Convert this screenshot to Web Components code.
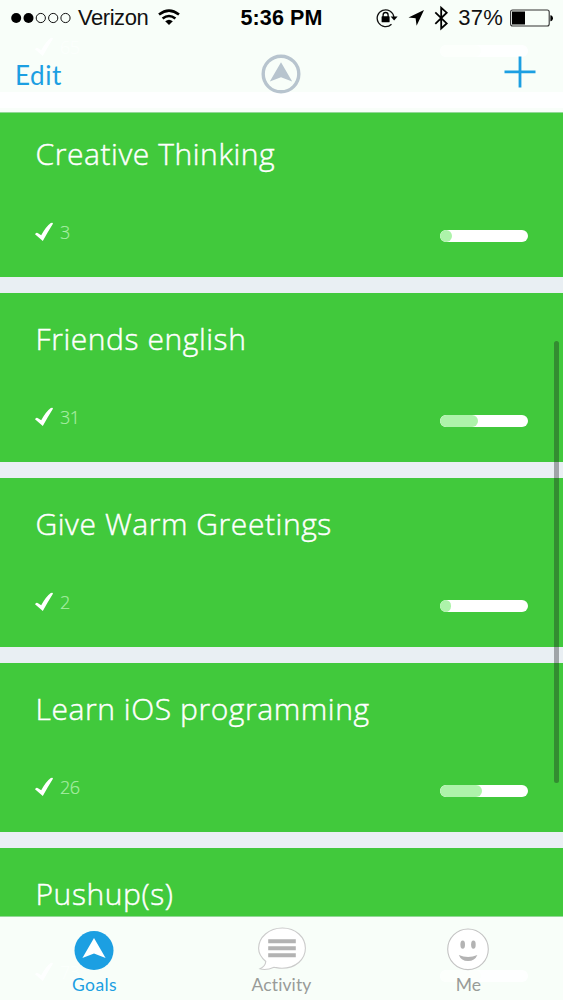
<!DOCTYPE html>
<html lang="en">
<head>
<meta charset="utf-8">
<title>Goals</title>
<style>
    html, body {margin: 0; height: 100%; overflow: hidden; background: #e9eff3}
</style>
</head>
<body>
<goals-app></goals-app>

<script>
// StatusBar
class StatusBar extends HTMLElement {
    constructor() {
        super();
        this.attachShadow({mode: 'open'}).innerHTML = `
            <style>
                :host{display:grid;grid-template-columns:1fr auto 1fr;align-items:center;height:36px;
                    color:#111;font:22px/36px "Liberation Sans",sans-serif;white-space:nowrap}
                div{display:flex;align-items:center}
                svg{display:block;flex:none}
                .left{padding-left:11px}
                .carrier{margin-left:6px;width:71px;letter-spacing:-.45px}
                .wifi{margin-left:9px}
                .time{color:#000;font-weight:bold;font-size:21.5px;letter-spacing:.1px}
                .right{justify-content:flex-end;padding-right:10px}
                .battery{margin-left:7px}
                .charge{margin-left:7px;letter-spacing:.2px}
            </style>
            <div class=left>
                <svg width="61" height="36" viewBox="0 0 61 36">
                    <g fill="#000"><circle cx="5.2" cy="18" r="5"/><circle cx="17.5" cy="18" r="5"/></g>
                    <g fill="none" stroke="#111" stroke-width="1"><circle cx="29.8" cy="18" r="4.6"/>
                    <circle cx="42.2" cy="18" r="4.6"/><circle cx="54.5" cy="18" r="4.6"/></g>
                </svg>
                <span class=carrier>Verizon</span>
                <svg class=wifi width="22" height="36" viewBox="0 0 22 36" fill="none" stroke="#000" stroke-width="2.6">
                    <path d="M1 14.6Q11 6.6 21 14.6M4.6 18.6Q11 13.4 17.4 18.6"/>
                    <path d="M7.2 21.3Q11 18.3 14.8 21.3L11 25z" fill="#000" stroke="none"/>
                </svg>
            </div>
            <div class=time>5:36 PM</div>
            <div class=right>
                <svg width="75" height="36" viewBox="0 0 75 36">
                    <path d="M15.5 24.2A8.4 8.4 0 1 1 17.9 17" fill="none" stroke="#111" stroke-width="1.3"/>
                    <path d="M14.6 16.4h7l-3.5 4z"/>
                    <rect x="5.6" y="16.3" width="8" height="6" rx=".6"/>
                    <path d="M7.1 17v-2a2.5 2.5 0 0 1 5 0v2" fill="none" stroke="#000" stroke-width="1.3"/>
                    <path d="M48 10L32.5 17.6L39.6 18.2L40.6 25.7z"/>
                    <path d="M59.3 12.3L70.7 23.4L65.2 28.4V7.8L70.7 12.7L59.3 23.8" fill="none" stroke="#000" stroke-width="1.8"/>
                </svg>
                <span class=charge>37%</span>
                <svg class=battery width="43" height="36" viewBox="0 0 43 36">
                    <rect x=".6" y="10" width="38.6" height="16" rx="2" fill="none" stroke="#333" stroke-width="1.1"/>
                    <rect x="2" y="11.5" width="13" height="13"/>
                    <path d="M40.4 15.2c3.4 0 3.4 6 0 6z"/>
                </svg>
            </div>`;
    }
}

// NavBar
class NavBar extends HTMLElement {
    constructor() {
        super();
        this.attachShadow({mode: 'open'}).innerHTML = `
            <style>
                :host{display:block;height:112px;background:rgba(254,255,255,.97);border-bottom:1px solid #93d898}
                .row{display:grid;grid-template-columns:1fr 40px 1fr;align-items:start;padding:18px 28px 0 15px;
                    color:#1c9fe2;font:26px/42px Lato,sans-serif}
                svg{display:block}
                .edit{letter-spacing:.6px;height:44px}
                .logo{margin:0 -6px 0 6px}
                .plus{justify-self:end;margin:2px -1px 0 0}
            </style>
            <status-bar></status-bar>
            <div class=row>
                <span class=edit>Edit</span>
                <svg class=logo width="40" height="40" viewBox="0 0 40 40">
                    <circle cx="20" cy="20" r="17.8" fill="none" stroke="#b7c4ce" stroke-width="3.4"/>
                    <path d="M20 8.2L31.2 27.5L20 23.3L8.8 27.5z" fill="#b7c4ce"/>
                </svg>
                <svg class=plus width="32" height="32" viewBox="0 0 32 32" stroke="#1c9fe2" stroke-width="2.8">
                    <path d="M.5 15.9h31M16 .5v31"/>
                </svg>
            </div>`;
    }
}

// GoalCard
class GoalCard extends HTMLElement {
    constructor() {
        super();
        this.attachShadow({mode: 'open'}).innerHTML = `
            <style>
                :host{display:flex;flex-direction:column;justify-content:space-between;flex:none;box-sizing:border-box;
                    height:169px;padding:26px 35px 32px;background:#41c93c;color:#fff;
                    font-family:"Open Sans","Noto Sans",sans-serif}
                .title{height:42px;padding-left:.5px;font-size:30px;line-height:40px;font-weight:300;
                    letter-spacing:.57px;white-space:nowrap;-webkit-text-stroke:.45px currentColor}
                .foot{display:flex;align-items:center;height:26px}
                .count{flex:1;margin-left:7px;font-size:18px;line-height:26px;font-weight:300;letter-spacing:-.5px;
                    color:#a9eda5;-webkit-text-stroke:.2px currentColor}
                .bar{width:88px;height:12px;margin-top:7px;border-radius:6px;background:#fff;overflow:hidden}
                .done{width:var(--done,12px);height:12px;border-radius:6px;background:#adf3aa}
            </style>
            <div class=title><slot></slot></div>
            <div class=foot>
                <svg width="18" height="20" viewBox="0 0 18 20"><path d="M0 12.2Q1.5 10.2 3 11.2L6.2 13.2Q11 4.5 15.8 1Q18.4 .2 17.8 2Q13 9.5 7.8 19Z" fill="#fff"/></svg>
                <span class=count></span>
                <div class=bar><div class=done></div></div>
            </div>`;
        this.shadowRoot.querySelector('.count').textContent = this.getAttribute('count');
        this.style.setProperty('--done', this.getAttribute('done') + 'px');
    }
}

// TabItem
class TabItem extends HTMLElement {
    constructor() {
        super();
        this.attachShadow({mode: 'open'}).innerHTML = `
            <style>
                :host{display:flex;flex-direction:column;align-items:center;color:#989b98;
                    font:17.5px/22px Lato,sans-serif;letter-spacing:.1px}
                :host([active]){color:#1c9fe2;letter-spacing:.4px}
                ::slotted(svg){display:block;margin:8px 0 1px}
            </style>
            <slot name=icon></slot>
            <span><slot></slot></span>`;
    }
}

// TabBar
class TabBar extends HTMLElement {
    constructor() {
        super();
        this.attachShadow({mode: 'open'}).innerHTML = `
            <style>
                :host{display:grid;grid-template-columns:repeat(3,187px);justify-content:center;
                    background:rgba(254,255,255,.97);border-top:1px solid #93d898}
            </style>
            <tab-item active>
                <svg slot=icon width="48" height="48" viewBox="1 0 48 48">
                    <circle cx="24" cy="25.5" r="19.5" fill="#1c9fe2"/>
                    <path d="M24 12.9L35.6 33L24 28.6L12.4 33z" fill="#fff"/>
                </svg>Goals</tab-item>
            <tab-item>
                <svg slot=icon width="48" height="48" viewBox="0 0 48 48">
                    <path d="M7.8 36.5C3 32.5.6 28.5.6 23.3C.6 12.2 11 3 24.4 3S47.4 12.2 47.4 23.3S37.5 43.3 24 43.3C20 43.3 18.5 42.5 16 42.2C12 44 6.2 45.2 2 43.8C6 42 7.5 39.5 7.8 36.5Z" fill="#fff" stroke="#cbcbcb" stroke-width="1.1"/>
                    <path d="M10.2 16.2H37.8M10.2 23.2H37.8M10.2 30.2H37.8" stroke="#b3b3b3" stroke-width="4"/>
                </svg>Activity</tab-item>
            <tab-item>
                <svg slot=icon width="48" height="48" viewBox="1 0 48 48">
                    <circle cx="24" cy="24.3" r="20.3" fill="#fff" stroke="#c3c3c3" stroke-width="1.1"/>
                    <g fill="#b3b3b3"><ellipse cx="18.7" cy="19.7" rx="2.3" ry="4.1"/><ellipse cx="29.4" cy="19.7" rx="2.3" ry="4.1"/>
                    <path d="M14.8 30Q24 34.2 33.4 30Q30.8 36 24 36T14.8 30z"/></g>
                </svg>Me</tab-item>`;
    }
}

// GoalsApp: the list fills the screen, both bars are translucent and share its grid cells
class GoalsApp extends HTMLElement {
    constructor() {
        super();
        this.attachShadow({mode: 'open'}).innerHTML = `
            <style>
                :host{display:grid;grid-template:113px minmax(0,1fr) 84px/100%;height:1000px;overflow:hidden;background:#e9eff3}
                .list{grid-area:1/1/4/2;display:flex;flex-direction:column;gap:16px;margin-top:-77px;min-height:0}
                nav-bar{grid-area:1/1;z-index:1}
                tab-bar{grid-area:3/1;z-index:1}
                .scroll{grid-area:1/1/4/2;justify-self:end;width:5px;height:442px;margin:341px 4px 0 0;
                    border-radius:3px;background:rgba(25,25,30,.35);z-index:1}
            </style>
            <div class=list>
                <goal-card count=65 done=41></goal-card>
                <goal-card count=3 done=12>Creative Thinking</goal-card>
                <goal-card count=31 done=38>Friends english</goal-card>
                <goal-card count=2 done=11>Give Warm Greetings</goal-card>
                <goal-card count=26 done=42>Learn iOS programming</goal-card>
                <goal-card count=73 done=41>Pushup(s)</goal-card>
            </div>
            <nav-bar></nav-bar>
            <tab-bar></tab-bar>
            <div class=scroll></div>`;
    }
}

customElements.define('status-bar', StatusBar);
customElements.define('nav-bar', NavBar);
customElements.define('goal-card', GoalCard);
customElements.define('tab-item', TabItem);
customElements.define('tab-bar', TabBar);
customElements.define('goals-app', GoalsApp);
</script>
</body>
</html>
